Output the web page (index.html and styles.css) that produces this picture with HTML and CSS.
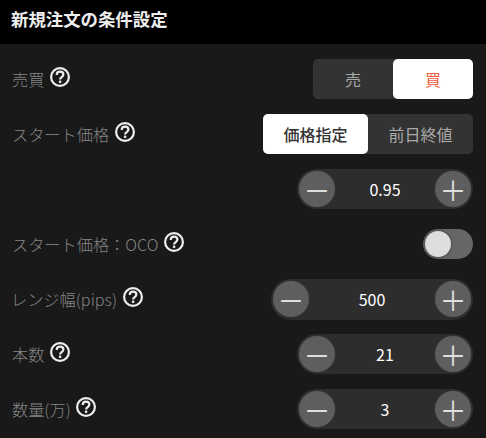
FILE: index.html
```html
<!DOCTYPE html>
<html lang="ja">
<head>
    <meta charset="UTF-8">
    <title>新規注文の条件設定</title>
    <link rel="stylesheet" href="styles.css">
</head>
<body>
    <svg class="defs" width="0" height="0">
        <symbol id="help" viewBox="0 0 20 20">
            <circle cx="10" cy="10" r="8.9" fill="none" stroke="currentColor" stroke-width="2.2"/>
            <path d="M6.7 8c0-2 1.5-3.3 3.4-3.3s3.3 1.2 3.3 2.9c0 2.4-3.3 2.5-3.3 4.8" fill="none" stroke="currentColor" stroke-width="2.2"/>
            <rect x="8.9" y="13.6" width="2.4" height="2.3" fill="currentColor"/>
        </symbol>
    </svg>

    <header class="title">新規注文の条件設定</header>

    <main class="form">
        <div class="row">
            <div class="label">売買 <svg class="help"><use href="#help"/></svg></div>
            <div class="segment">
                <button class="seg seg-sm">売</button>
                <button class="seg seg-sm active buy">買</button>
            </div>
        </div>

        <div class="row">
            <div class="label">スタート価格 <svg class="help"><use href="#help"/></svg></div>
            <div class="segment">
                <button class="seg seg-a active">価格指定</button>
                <button class="seg seg-b">前日終値</button>
            </div>
        </div>

        <div class="row row-end">
            <div class="stepper">
                <button class="step">－</button>
                <span class="value">0.95</span>
                <button class="step">＋</button>
            </div>
        </div>

        <div class="row">
            <div class="label">スタート価格：OCO <svg class="help"><use href="#help"/></svg></div>
            <div class="toggle"><span class="knob"></span></div>
        </div>

        <div class="row">
            <div class="label label-range">レンジ幅(pips) <svg class="help"><use href="#help"/></svg></div>
            <div class="stepper wide">
                <button class="step">－</button>
                <span class="value">500</span>
                <button class="step">＋</button>
            </div>
        </div>

        <div class="row">
            <div class="label">本数 <svg class="help"><use href="#help"/></svg></div>
            <div class="stepper">
                <button class="step">－</button>
                <span class="value">21</span>
                <button class="step">＋</button>
            </div>
        </div>

        <div class="row">
            <div class="label">数量(万) <svg class="help"><use href="#help"/></svg></div>
            <div class="stepper">
                <button class="step">－</button>
                <span class="value">3</span>
                <button class="step">＋</button>
            </div>
        </div>
    </main>
</body>
</html>
```

FILE: styles.css
```css
* {
    box-sizing: border-box;
}

html, body {
    height: 100%;
}

body {
    margin: 0;
    overflow: hidden;
    background: #191919;
    color: #fff;
    font-family: "Noto Sans CJK JP", "Noto Sans", sans-serif;
}

.defs {
    position: absolute;
}

.title {
    height: 44px;
    padding: 0 11px;
    background: #000;
    color: #eee;
    font-size: 17.4px;
    font-weight: 700;
    line-height: 37px;
}

.form {
    display: flex;
    flex-direction: column;
    gap: 15px;
    padding: 15px 13px 0 12px;
}

.row {
    display: flex;
    align-items: center;
    justify-content: space-between;
    height: 40px;
}

.row-end {
    justify-content: flex-end;
}

.label {
    display: flex;
    align-items: center;
    gap: 5.5px;
    color: #858585;
    font-size: 16.2px;
    font-weight: 300;
    line-height: 24px;
    white-space: nowrap;
}

.label-range {
    margin-left: -1px;
}

.help {
    width: 20px;
    height: 20px;
    margin-top: -4px;
    color: #eee;
}

.segment {
    display: flex;
    height: 40px;
    border-radius: 5px;
    background: #333;
}

.seg {
    height: 40px;
    padding: 0;
    border: none;
    border-radius: 5px;
    background: transparent;
    color: #aaa;
    font-family: inherit;
    font-size: 16px;
}

.seg-sm {
    width: 80px;
}

.seg-a {
    width: 105px;
}

.seg-b {
    width: 105px;
}

.active {
    background: #fff;
    color: #333;
    font-weight: 500;
}

.buy {
    color: #f5603f;
    font-weight: 400;
}

.stepper {
    display: flex;
    align-items: center;
    justify-content: space-between;
    width: 176px;
    height: 40px;
    padding: 0 2px;
    border-radius: 20px;
    background: #2d2d2d;
}

.wide {
    width: 202px;
    height: 41px;
}

.step {
    display: flex;
    align-items: center;
    justify-content: center;
    width: 36px;
    height: 36px;
    padding: 0;
    border: none;
    border-radius: 50%;
    background: #5e5e5e;
    box-shadow: 0 0 3px #3a3a3a;
    color: #ddd;
    font-family: inherit;
    font-size: 27px;
    line-height: 1;
}

.value {
    color: #fff;
    font-size: 16px;
    font-weight: 400;
}

.toggle {
    display: flex;
    align-items: center;
    width: 50px;
    height: 30px;
    padding: 0 2px;
    border-radius: 15px;
    background: #666;
}

.knob {
    width: 26px;
    height: 26px;
    border-radius: 50%;
    background: #ddd;
    box-shadow: 0 0 3px #333;
}
```
